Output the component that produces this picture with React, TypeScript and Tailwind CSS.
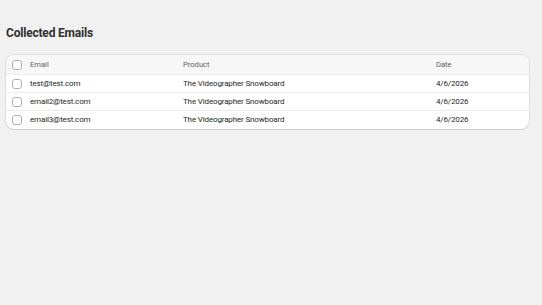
const rows = [
  { email: 'test@test.com', product: 'The Videographer Snowboard', date: '4/6/2026' },
  { email: 'email2@test.com', product: 'The Videographer Snowboard', date: '4/6/2026' },
  { email: 'email3@test.com', product: 'The Videographer Snowboard', date: '4/6/2026' },
];

function Checkbox() {
  return <div className="w-[10px] h-[10px] rounded-[3px] border border-[#b0b0b0] bg-white" />;
}

export default function App() {
  return (
    <div className="min-h-screen w-full bg-[#f1f1f1] font-['Roboto',sans-serif] text-[#303030]">
      <div className="px-[6px] pt-[25px]">
        <h1 className="text-[12px] leading-[16px] font-bold tracking-[-0.2px] text-[#303030]">Collected Emails</h1>

        <div className="mt-[14px] mr-[7px] bg-white rounded-[8px] overflow-hidden shadow-[0_1px_0_0_rgba(26,26,26,0.07),0_0_0_1px_rgba(0,0,0,0.08)]">
          <div className="flex items-center h-[20px] bg-[#f7f7f7] border-b border-[#ebebeb] text-[7.6px] text-[#616161]">
            <div className="w-[24px] pl-[6px] flex items-center"><Checkbox /></div>
            <div className="w-[153px]">Email</div>
            <div className="w-[253px]">Product</div>
            <div>Date</div>
          </div>
          {rows.map((r, i) => (
            <div
              key={i}
              className={`flex items-center h-[18px] text-[8px] tracking-[-0.15px] text-[#1f1f1f] ${i < rows.length - 1 ? 'border-b border-[#ebebeb]' : ''}`}
            >
              <div className="w-[24px] pl-[6px] flex items-center"><Checkbox /></div>
              <div className="w-[153px]">{r.email}</div>
              <div className="w-[253px]">{r.product}</div>
              <div>{r.date}</div>
            </div>
          ))}
        </div>
      </div>
    </div>
  );
}
